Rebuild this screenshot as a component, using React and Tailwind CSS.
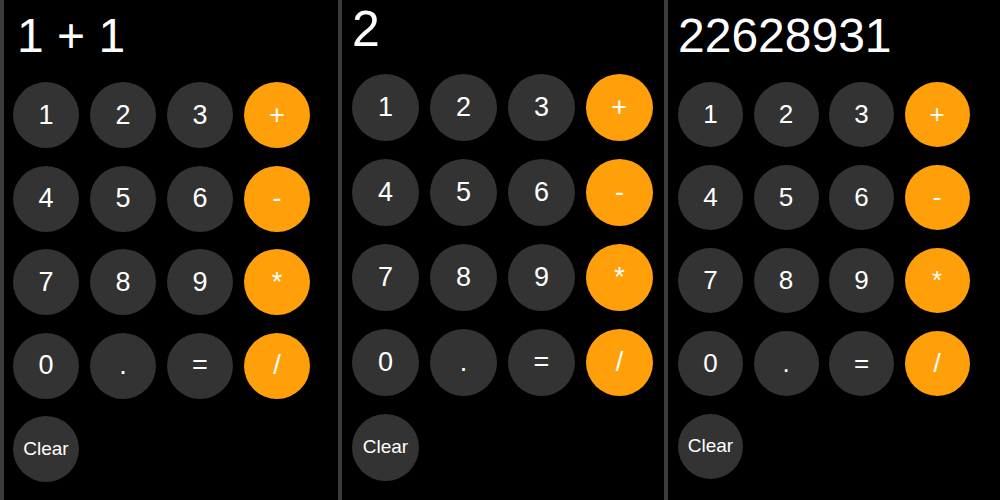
const KEYS = [
  ["1", "num"], ["2", "num"], ["3", "num"], ["+", "op"],
  ["4", "num"], ["5", "num"], ["6", "num"], ["-", "op"],
  ["7", "num"], ["8", "num"], ["9", "num"], ["*", "op"],
  ["0", "num"], [".", "num"], ["=", "num"], ["/", "op"],
];

const PANELS = [
  {
    display: "1 + 1",
    width: "w-[338px]",
    pad: "pl-[9px]",
    screen: "mt-[12px] h-[48px] text-[48px] leading-[48px] pl-[4px]",
    grid: "mt-[22px] grid-cols-[repeat(4,66px)] gap-x-[11px] gap-y-[17.5px]",
    btn: "h-[66px] w-[66px] text-[27px]",
    clear: "h-[66px] w-[66px] text-[19px]",
  },
  {
    display: "2",
    width: "w-[326px]",
    pad: "pl-[10px]",
    screen: "mt-[4px] h-[50px] text-[50px] leading-[50px]",
    grid: "mt-[20px] grid-cols-[repeat(4,67px)] gap-x-[11px] gap-y-[18px]",
    btn: "h-[67px] w-[67px] text-[27px]",
    clear: "h-[67px] w-[67px] text-[19px]",
  },
  {
    display: "22628931",
    width: "w-[336px]",
    pad: "pl-[10px]",
    screen: "mt-[12px] h-[48px] text-[48px] leading-[48px]",
    grid: "mt-[22px] grid-cols-[repeat(4,65px)] gap-x-[10.5px] gap-y-[18px]",
    btn: "h-[65px] w-[65px] text-[26px]",
    clear: "h-[65px] w-[65px] text-[19px]",
  },
];

function Calculator({ p }) {
  return (
    <div className={`${p.width} ${p.pad} h-[500px] shrink-0 border-l-4 border-[#3b3b3b] bg-black`}>
      <div className={`${p.screen} whitespace-pre text-white`}>{p.display}</div>
      <div className={`${p.grid} grid`}>
        {KEYS.map(([k, kind]) => (
          <button
            key={k}
            className={`${p.btn} flex items-center justify-center rounded-full text-white ${
              kind === "op" ? "bg-[#ff9f0a]" : "bg-[#333333]"
            }`}
          >
            {k}
          </button>
        ))}
        <button className={`${p.clear} flex items-center justify-center rounded-full bg-[#333333] text-white`}>
          Clear
        </button>
      </div>
    </div>
  );
}

export default function App() {
  return (
    <div className="flex h-[500px] w-[1000px] overflow-hidden bg-black font-['Liberation_Sans',Arial,sans-serif]">
      {PANELS.map((p, i) => (
        <Calculator key={i} p={p} />
      ))}
    </div>
  );
}
